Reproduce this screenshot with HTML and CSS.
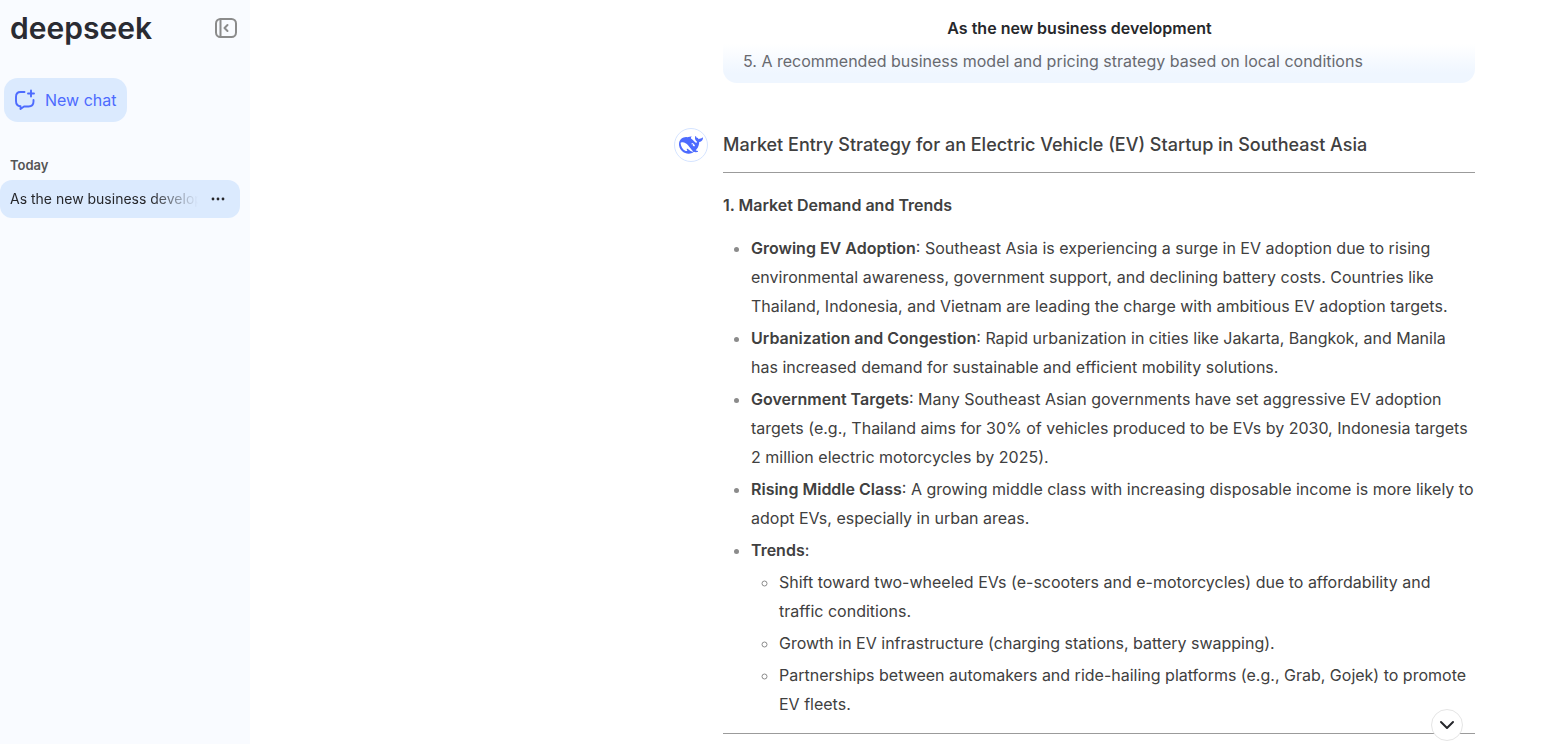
FILE: index.html
```html
<!DOCTYPE html>
<html lang="en">
<head>
<meta charset="UTF-8">
<meta name="viewport" content="width=device-width, initial-scale=1.0">
<title>As the new business development</title>
<link rel="stylesheet" href="styles.css">
</head>
<body>

<aside class="sidebar">
  <div class="sidebar-top">
    <a href="#" class="logo">deepseek</a>
    <button class="icon-button" aria-label="Close sidebar">
      <svg width="24" height="24" viewBox="0 0 24 24" fill="none" stroke="#8b8b8b" stroke-width="2" stroke-linecap="round" stroke-linejoin="round">
        <rect x="2" y="3" width="20" height="18" rx="4.500"/>
        <path d="M6.500 3v18"/>
        <path d="M13.500 9L10.500 12l3 3"/>
      </svg>
    </button>
  </div>

  <button class="new-chat">
    <svg width="22" height="22" viewBox="0 0 22 22" fill="none" stroke="#4d6bfe" stroke-width="1.900" stroke-linecap="round" stroke-linejoin="round">
      <path d="M10.500 3H6.500C3.500 3 2 5 2 8v4c0 3 1.500 5 4.500 5.300V20l3.500-2.500h4.500c3 0 5-2 5-5V11"/>
      <path d="M17 1.500v6M14 4.500h6"/>
    </svg>
    <span>New chat</span>
  </button>

  <h2 class="group-title">Today</h2>
  <div class="chat-item">
    <a href="#" class="chat-name">As the new business development</a>
    <button class="more-button" aria-label="More">
      <svg width="14" height="4" viewBox="0 0 14 4" fill="#26272b">
        <circle cx="2" cy="2" r="1.400"/>
        <circle cx="7" cy="2" r="1.400"/>
        <circle cx="12" cy="2" r="1.400"/>
      </svg>
    </button>
  </div>
</aside>

<main class="main">
  <div class="conversation">
    <header class="header">
      <h1>As the new business development</h1>
    </header>

    <div class="user-message">5. A recommended business model and pricing strategy based on local conditions</div>

    <article class="answer">
      <div class="avatar">
        <svg width="24" height="24" viewBox="0 0 24 24" fill="#4d6bfe">
          <path d="M23.748 4.482c-.254-.124-.364.113-.512.234-.051.039-.094.09-.137.136-.372.397-.806.657-1.373.626-.829-.046-1.537.214-2.163.848-.133-.782-.575-1.248-1.247-1.548-.352-.156-.708-.311-.955-.65-.172-.241-.219-.51-.305-.774-.055-.16-.11-.323-.293-.35-.2-.031-.278.136-.356.276-.313.572-.434 1.202-.422 1.84.027 1.436.633 2.58 1.838 3.393.137.093.172.187.129.323-.082.28-.18.552-.266.833-.055.179-.137.217-.329.14a5.526 5.526 0 01-1.736-1.18c-.857-.828-1.631-1.742-2.597-2.458a11.365 11.365 0 00-.689-.471c-.985-.957.13-1.743.388-1.836.27-.098.093-.432-.779-.428-.872.004-1.67.295-2.687.684a3.055 3.055 0 01-.465.137 9.597 9.597 0 00-2.883-.102c-1.885.21-3.39 1.102-4.497 2.623C.082 8.606-.231 10.684.152 12.85c.403 2.284 1.569 4.175 3.36 5.653 1.858 1.533 3.997 2.284 6.438 2.14 1.482-.085 3.133-.284 4.994-1.86.47.234.962.327 1.78.397.63.059 1.236-.03 1.705-.128.735-.156.684-.837.419-.961-2.155-1.004-1.682-.595-2.113-.926 1.096-1.296 2.746-2.642 3.392-7.003.05-.347.007-.565 0-.845-.004-.17.035-.237.23-.256a4.173 4.173 0 001.545-.475c1.396-.763 1.96-2.015 2.093-3.517.02-.23-.004-.467-.247-.588zM11.581 18c-2.089-1.642-3.102-2.183-3.52-2.16-.392.024-.321.471-.235.763.09.288.207.486.371.739.114.167.192.416-.113.603-.673.416-1.842-.14-1.897-.167-1.361-.802-2.5-1.86-3.301-3.307-.774-1.393-1.224-2.887-1.298-4.482-.02-.386.093-.522.477-.592a4.696 4.696 0 011.529-.039c2.132.312 3.946 1.265 5.468 2.774.868.86 1.525 1.887 2.202 2.891.72 1.066 1.494 2.082 2.48 2.914.348.292.625.514.891.677-.802.09-2.14.11-3.054-.614zm1-6.44a.306.306 0 01.415-.287.302.302 0 01.2.288.306.306 0 01-.31.307.303.303 0 01-.304-.308zm3.11 1.596c-.2.081-.399.151-.59.16a1.245 1.245 0 01-.798-.254c-.274-.23-.47-.358-.552-.758a1.73 1.73 0 01.016-.588c.07-.327-.008-.537-.239-.727-.187-.156-.426-.199-.688-.199a.559.559 0 01-.254-.078.253.253 0 01-.114-.358c.028-.054.16-.186.192-.21.356-.202.767-.136 1.146.016.352.144.618.408 1.001.782.391.451.462.576.685.914.176.265.336.537.445.848.067.195-.019.354-.25.452z"/>
        </svg>
      </div>
      <div class="answer-content">
        <h3>Market Entry Strategy for an Electric Vehicle (EV) Startup in Southeast Asia</h3>
        <hr>
        <h4>1. Market Demand and Trends</h4>
        <ul>
          <li><strong>Growing EV Adoption</strong>: Southeast Asia is experiencing a surge in EV adoption due to rising environmental awareness, government support, and declining battery costs. Countries like Thailand, Indonesia, and Vietnam are leading the charge with ambitious EV adoption targets.</li>
          <li><strong>Urbanization and Congestion</strong>: Rapid urbanization in cities like Jakarta, Bangkok, and Manila has increased demand for sustainable and efficient mobility solutions.</li>
          <li><strong>Government Targets</strong>: Many Southeast Asian governments have set aggressive EV adoption targets (e.g., Thailand aims for 30% of vehicles produced to be EVs by 2030, Indonesia targets 2 million electric motorcycles by 2025).</li>
          <li><strong>Rising Middle Class</strong>: A growing middle class with increasing disposable income is more likely to adopt EVs, especially in urban areas.</li>
          <li><strong>Trends</strong>:
            <ul>
              <li>Shift toward two-wheeled EVs (e-scooters and e-motorcycles) due to affordability and traffic conditions.</li>
              <li>Growth in EV infrastructure (charging stations, battery swapping).</li>
              <li>Partnerships between automakers and ride-hailing platforms (e.g., Grab, Gojek) to promote EV fleets.</li>
            </ul>
          </li>
        </ul>
        <hr>
      </div>
    </article>

    <button class="scroll-down" aria-label="Scroll to bottom">
      <svg width="16" height="10" viewBox="0 0 16 10" fill="none" stroke="#26272b" stroke-width="2" stroke-linecap="round" stroke-linejoin="round">
        <path d="M2 2l6 6 6-6"/>
      </svg>
    </button>
  </div>
</main>

</body>
</html>
```
FILE: styles.css
```css
* { margin: 0; padding: 0; box-sizing: border-box; }
body { display: flex; height: 100vh; overflow: hidden; font-family: Inter, "Noto Sans", sans-serif; font-size: 16px; color: #404040; background-color: #fff; }
button { border: none; background: none; font: inherit; cursor: pointer; }
a { color: inherit; text-decoration: none; }
svg { display: block; }

/* Sidebar */
.sidebar { width: 250px; flex-shrink: 0; background-color: #f9fbff; }
.sidebar-top { display: flex; align-items: center; justify-content: space-between; height: 56px; padding: 0 12px 0 10px; }
.logo { font-size: 30px; font-weight: 600; line-height: 40px; color: #2a2b32; }
.new-chat { display: flex; align-items: center; gap: 9px; height: 44px; margin: 22px 0 0 4px; padding: 0 10px; border-radius: 14px; background-color: #dbeafe; color: #4d6bfe; }
.group-title { margin-top: 34px; padding-left: 10px; font-size: 13px; font-weight: 600; line-height: 18px; color: #555; }
.chat-item { display: flex; align-items: center; justify-content: space-between; width: 240px; height: 38px; margin-top: 6px; padding: 0 15px 0 10px; border-radius: 12px; background-color: #dbeafe; }
.chat-name { width: 188px; overflow: hidden; white-space: nowrap; font-size: 14px; line-height: 20px; color: #26272b; -webkit-mask-image: linear-gradient(to right, #000 75%, transparent); mask-image: linear-gradient(to right, #000 75%, transparent); }

/* Conversation */
.main { flex: 1; min-width: 0; display: flex; justify-content: flex-end; padding-right: 68px; }
.conversation { position: relative; width: 100%; max-width: 801px; height: 100%; overflow: hidden; }
.header { display: flex; align-items: center; justify-content: center; height: 44px; padding: 12px 0 0 10px; }
.header h1 { font-size: 16px; font-weight: 600; line-height: 24px; color: #26272b; }
.user-message { margin-left: 49px; padding: 3px 20px 7px; border-radius: 0 0 14px 14px; background: linear-gradient(#fff, #eff6ff 75%); line-height: 29px; color: #686a70; }
.answer { display: flex; gap: 15px; margin-top: 45px; }
.avatar { display: flex; align-items: center; justify-content: center; flex-shrink: 0; width: 34px; height: 34px; border: 1px solid #d5e4ff; border-radius: 50%; }
.answer-content { flex: 1; min-width: 0; line-height: 29px; }
.answer-content h3 { padding-top: 2px; font-size: 18px; font-weight: 500; line-height: 30px; }
.answer-content h4 { margin-bottom: 14px; font-size: 16px; font-weight: 600; }
.answer-content hr { margin: 12px 0 18px; border: none; border-top: 1px solid #9b9b9b; }
.answer-content ul + hr { margin-top: 14px; }
.answer-content ul { padding-left: 28px; }
.answer-content li + li, .answer-content li ul { margin-top: 3px; }
.answer-content li::marker { color: #8b8b8b; }
.answer-content strong { font-weight: 600; }

/* Floating button above the text */
.scroll-down { position: absolute; right: 12px; bottom: 3px; display: flex; align-items: center; justify-content: center; width: 32px; height: 32px; border: 1px solid #e5e5e5; border-radius: 50%; background-color: #fff; }
```
